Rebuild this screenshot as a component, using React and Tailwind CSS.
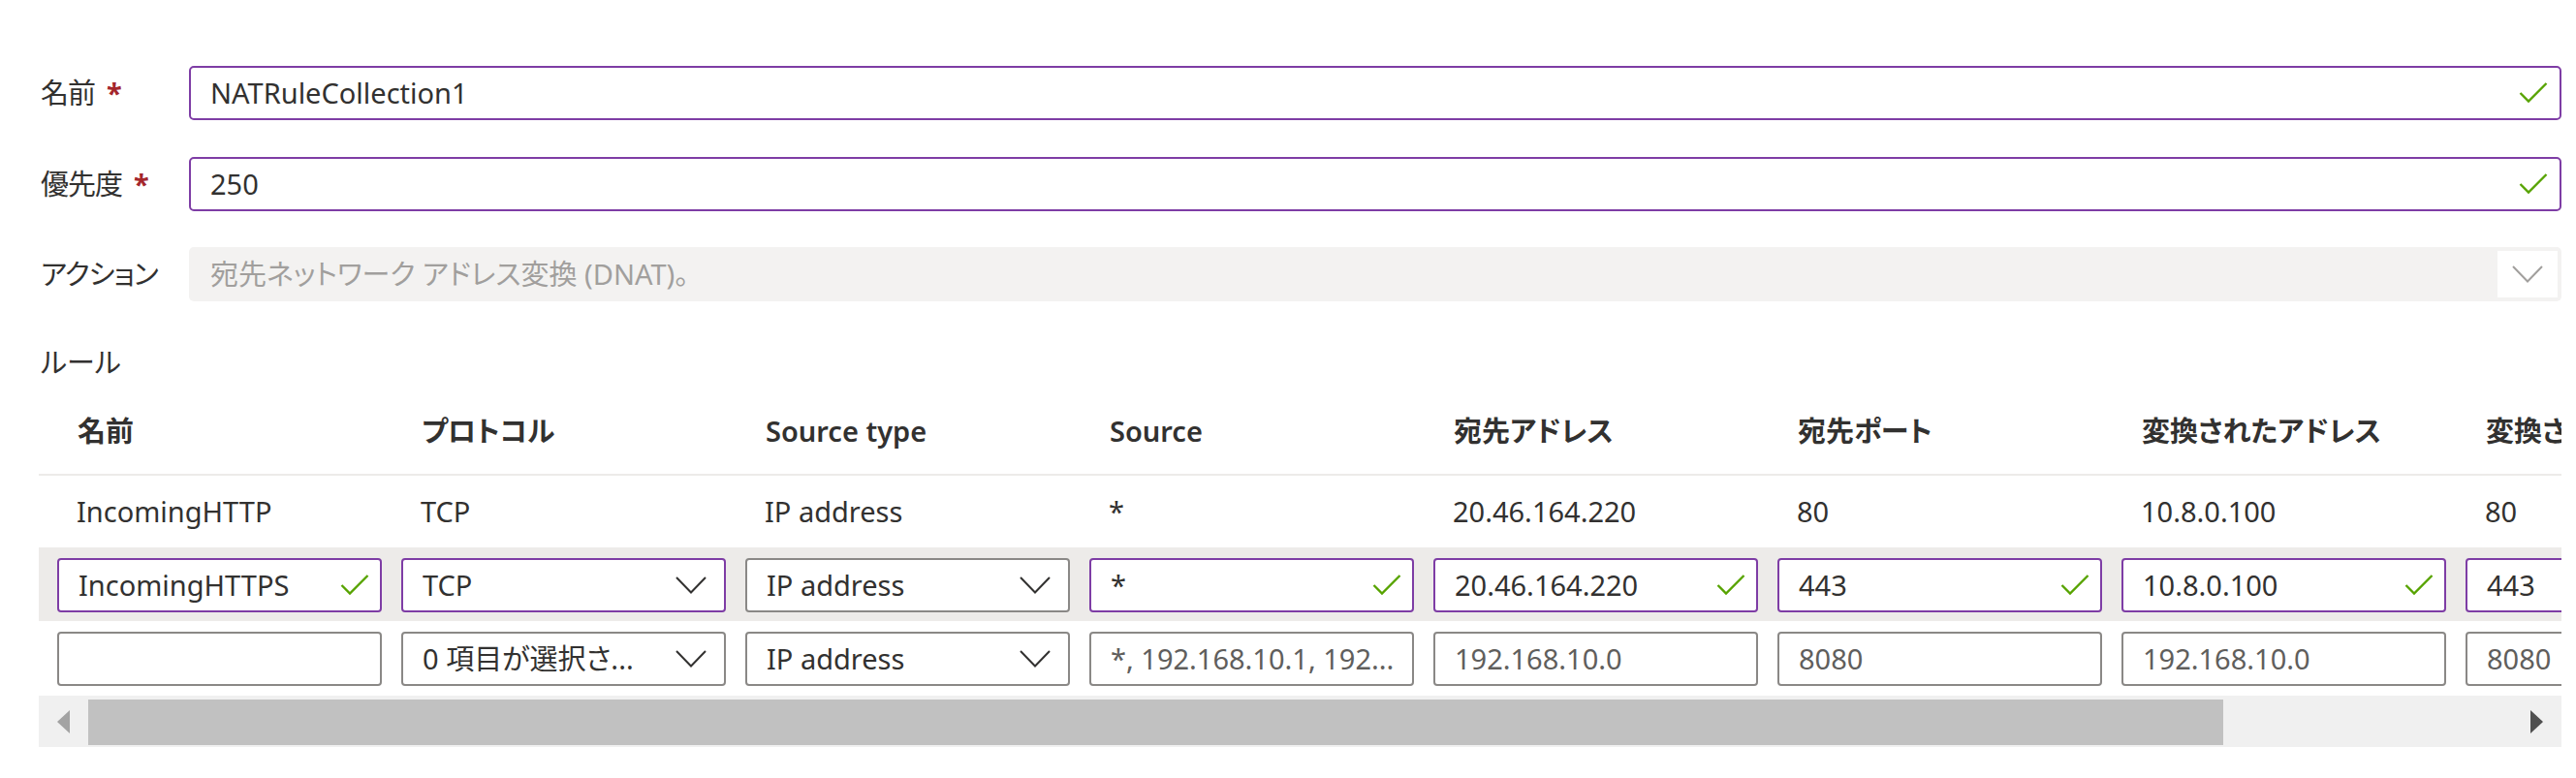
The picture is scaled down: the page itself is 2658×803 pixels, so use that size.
import React from "react";

const FONT = {
  fontFamily: '"Noto Sans", "Noto Sans CJK JP", sans-serif',
};

function Check({ className = "" }) {
  return (
    <svg className={className} width="30" height="22" viewBox="0 0 30 22" fill="none">
      <polyline points="1.5,11 10,19.5 28.5,1" stroke="#57a300" strokeWidth="2.4" />
    </svg>
  );
}

function Chevron({ color = "#323130" }) {
  return (
    <svg width="32" height="18" viewBox="0 0 32 18" fill="none">
      <polyline points="1,1 16,16.5 31,1" stroke={color} strokeWidth="2" />
    </svg>
  );
}

const columns = [
  {
    head: "名前",
    r1: "IncomingHTTP",
    r2: { value: "IncomingHTTPS", focus: true, check: true },
    r3: { value: "" },
  },
  {
    head: "プロトコル",
    r1: "TCP",
    r2: { value: "TCP", focus: true, select: true },
    r3: { value: "0 項目が選択さ...", select: true },
  },
  {
    head: "Source type",
    r1: "IP address",
    r2: { value: "IP address", select: true },
    r3: { value: "IP address", select: true },
  },
  {
    head: "Source",
    r1: "*",
    r2: { value: "*", focus: true, check: true },
    r3: { value: "*, 192.168.10.1, 192...", placeholder: true },
  },
  {
    head: "宛先アドレス",
    r1: "20.46.164.220",
    r2: { value: "20.46.164.220", focus: true, check: true },
    r3: { value: "192.168.10.0", placeholder: true },
  },
  {
    head: "宛先ポート",
    r1: "80",
    r2: { value: "443", focus: true, check: true },
    r3: { value: "8080", placeholder: true },
  },
  {
    head: "変換されたアドレス",
    r1: "10.8.0.100",
    r2: { value: "10.8.0.100", focus: true, check: true },
    r3: { value: "192.168.10.0", placeholder: true },
  },
  {
    head: "変換されたポート",
    r1: "80",
    r2: { value: "443", focus: true, check: true },
    r3: { value: "8080", placeholder: true },
  },
];

function Cell({ field }) {
  const border = field.focus ? "border-[#7e3da5]" : "border-[#8a8886]";
  return (
    <div
      className={`flex h-[56px] w-[335px] shrink-0 items-center rounded-[4px] border-2 bg-white pl-[20px] ${
        field.select ? "pr-[18px]" : "pr-[11px]"
      } ${border}`}
    >
      <span
        className={`flex-1 truncate whitespace-nowrap ${
          field.placeholder ? "text-[#605e5c]" : "text-[#323130]"
        }`}
      >
        {field.value}
      </span>
      {field.check && <Check />}
      {field.select && <Chevron />}
    </div>
  );
}

function FormRow({ label, required, children, className = "" }) {
  return (
    <div className={`flex h-[56px] items-center ${className}`}>
      <div className="w-[155px] shrink-0 whitespace-nowrap pl-[2px] tracking-[-1px] text-[#323130]">
        {label}
        {required && <span className="ml-[12px] font-bold text-[#a4262c]">*</span>}
      </div>
      {children}
    </div>
  );
}

export default function App() {
  return (
    <div
      className="min-h-screen bg-white pl-[40px] pr-[15px] pt-[68px] text-[29px] leading-[40px] [font-feature-settings:'palt']"
      style={FONT}
    >
      <FormRow label="名前" required>
        <div className="flex h-[56px] flex-1 items-center rounded-[5px] border-2 border-[#7e3da5] pl-[20px] pr-[12px]">
          <span className="flex-1 text-[#323130]">NATRuleCollection1</span>
          <Check />
        </div>
      </FormRow>

      <FormRow label="優先度" required className="mt-[38px]">
        <div className="flex h-[56px] flex-1 items-center rounded-[5px] border-2 border-[#7e3da5] pl-[20px] pr-[12px]">
          <span className="flex-1 text-[#323130]">250</span>
          <Check />
        </div>
      </FormRow>

      <FormRow label="アクション" className="mt-[37px]">
        <div className="flex h-[56px] flex-1 items-center rounded-[5px] bg-[#f3f2f1] pl-[22px] pr-[4px]">
          <span className="flex-1 text-[#a19f9d]">宛先ネットワーク アドレス変換 (DNAT)。</span>
          <div className="flex h-[48px] w-[62px] items-center justify-center bg-white">
            <Chevron color="#a19f9d" />
          </div>
        </div>
      </FormRow>

      <div className="mt-[43px] pl-[2px] text-[#323130]">ルール</div>

      <div className="w-full overflow-hidden">
        <div className="flex h-[97px] items-center border-b-2 border-[#edebe9] pl-[19px] pt-[6px]">
          {columns.map((c) => (
            <div key={c.head} className="w-[355px] shrink-0 whitespace-nowrap pl-[21px] font-semibold text-[#323130]">
              {c.head}
            </div>
          ))}
        </div>

        <div className="flex h-[74px] items-center pl-[19px]">
          {columns.map((c) => (
            <div key={c.head} className="w-[355px] shrink-0 whitespace-nowrap pl-[20px] text-[#323130]">
              {c.r1}
            </div>
          ))}
        </div>

        <div className="flex h-[76px] gap-[20px] bg-[#edebe9] pl-[19px] pt-[11px]">
          {columns.map((c) => (
            <Cell key={c.head} field={c.r2} />
          ))}
        </div>

        <div className="flex h-[77px] gap-[20px] pl-[19px] pt-[11px]">
          {columns.map((c) => (
            <Cell key={c.head} field={c.r3} />
          ))}
        </div>

        <div className="flex h-[53px] bg-[#f0f0f0]">
          <div className="flex w-[51px] shrink-0 items-center justify-center">
            <div className="h-0 w-0 border-y-[12.5px] border-r-[13px] border-y-transparent border-r-[#a3a3a3]" />
          </div>
          <div className="mb-[2px] mt-[4px] w-[2203px] shrink-0 bg-[#c1c1c1]" />
          <div className="flex-1" />
          <div className="flex w-[51px] shrink-0 items-center justify-center">
            <div className="h-0 w-0 border-y-[12.5px] border-l-[13px] border-y-transparent border-l-[#505050]" />
          </div>
        </div>
      </div>
    </div>
  );
}
